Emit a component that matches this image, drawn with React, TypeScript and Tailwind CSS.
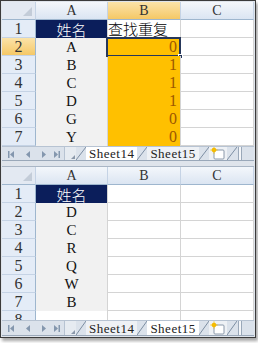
import React from "react";

const serif = "[font-family:'Liberation_Serif','DejaVu_Serif',serif]";
const cjk = "[font-family:'Noto_Sans_CJK_SC','Noto_Sans',sans-serif]";

function Slant({ h = 15 }: { h?: number }) {
  return (
    <svg width="10" height={h} viewBox={`0 0 10 ${h}`} className="shrink-0">
      <line x1="0" y1={h} x2="10" y2="0" stroke="#7d8ea3" strokeWidth="1" />
    </svg>
  );
}

function NavIcons() {
  return (
    <svg width="62" height="15" viewBox="0 0 62 15" className="shrink-0">
      <g fill="#8497ae">
        <rect x="6" y="4" width="1.5" height="7" />
        <polygon points="12,4 12,11 8,7.5" />
        <polygon points="28,4 28,11 24,7.5" />
        <polygon points="40,4 40,11 44,7.5" />
        <polygon points="52,4 52,11 56,7.5" />
        <rect x="56.5" y="4" width="1.5" height="7" />
      </g>
    </svg>
  );
}

function InsertIcon() {
  return (
    <svg width="18" height="15" viewBox="0 0 18 15" className="shrink-0">
      <rect x="5" y="4" width="10" height="9" fill="#ffffff" stroke="#8a98aa" strokeWidth="1" rx="1" />
      <circle cx="5" cy="4" r="2.3" fill="#f5b400" />
      <g stroke="#f5c400" strokeWidth="0.8">
        <line x1="5" y1="0.3" x2="5" y2="7.7" />
        <line x1="1.3" y1="4" x2="8.7" y2="4" />
      </g>
    </svg>
  );
}

function TabBar({ active, h }: { active: 0 | 1; h: number }) {
  const tabCls = (i: number) =>
    `flex items-center h-full px-[3px] text-[13px] leading-none tracking-[0.5px] text-[#222] ${serif} ${
      active === i ? "bg-white" : "bg-[#eef1f5]"
    }`;
  return (
    <div
      className="flex items-stretch bg-[#dbe2eb] border-t border-[#b7c3d2] border-b border-b-[#9aa8b9] overflow-hidden"
      style={{ height: h }}
    >
      <NavIcons />
      <div className="w-[12px] shrink-0 relative border-l border-[#b7c3d2] bg-[#e6ebf1]">
        <div className="absolute right-[1px] bottom-[1px] w-0 h-0 border-l-[4px] border-l-transparent border-b-[4px] border-b-[#8a98aa]" />
      </div>
      <Slant h={h - 2} />
      <div className={tabCls(0)}>Sheet14</div>
      <Slant h={h - 2} />
      <div className={tabCls(1)}>Sheet15</div>
      <Slant h={h - 2} />
      <div className="flex items-center bg-[#eef1f5]">
        <InsertIcon />
      </div>
      <Slant h={h - 2} />
      <div className="w-[4px] shrink-0 ml-[1px] border-x border-[#9aa8b9] bg-[#f4f6f9]" />
      <div className="flex-1" />
    </div>
  );
}

const cols = "grid grid-cols-[34px_72px_73px_73px]";

function HeaderRow({ selB }: { selB?: boolean }) {
  const base = `h-[18px] flex items-center justify-center text-[14px] leading-none text-[#333] ${serif} border-r border-[#c5d3e5] border-b border-b-[#9eb6ce]`;
  const norm = "bg-gradient-to-b from-[#f4f7fb] to-[#dbe5f2]";
  const sel = "bg-gradient-to-b from-[#fbe3a8] to-[#f5c865]";
  return (
    <div className={cols}>
      <div className={`${base} bg-[#e3e9f2] relative`}>
        <div className="absolute right-[3px] bottom-[3px] w-0 h-0 border-l-[9px] border-l-transparent border-b-[9px] border-b-[#c3ccd8]" />
      </div>
      <div className={`${base} ${norm}`}>A</div>
      <div className={`${base} ${selB ? sel : norm}`}>B</div>
      <div className={`${base} ${norm}`}>C</div>
    </div>
  );
}

type Cell = { text?: string; kind: "name" | "white" | "gray" | "gold" | "title" };

function Row({
  n,
  a,
  b,
  selNum,
  h = 18,
  selected,
}: {
  n: number;
  a: Cell;
  b: Cell;
  selNum?: boolean;
  h?: number;
  selected?: boolean;
}) {
  const numCls = `flex items-center justify-center text-[16px] leading-none text-[#333] ${serif} border-r border-[#9eb6ce] border-b border-b-[#c5d3e5] ${
    selNum ? "bg-gradient-to-b from-[#fbe3a8] to-[#f5c865]" : "bg-[#e4ecf7]"
  }`;
  const cellCls = (c: Cell, align: string) => {
    if (c.kind === "name")
      return `flex items-center justify-center bg-[#0b1e5b] text-white text-[15px] leading-none font-light ${cjk} border-r border-[#d4d4d4]`;
    if (c.kind === "title")
      return `flex items-center justify-start bg-white text-black text-[15px] leading-none font-light ${cjk} border-r border-b border-[#d4d4d4] whitespace-nowrap`;
    if (c.kind === "gray")
      return `flex items-center justify-center bg-[#f1f1f1] text-[#111] text-[15px] leading-none ${serif} border-r border-[#d4d4d4]`;
    if (c.kind === "gold")
      return `flex items-center ${align} pr-[3px] bg-[#ffc000] text-[#9c5700] text-[16px] leading-none ${serif} border-r border-[#d4d4d4]`;
    return `bg-white border-r border-b border-[#d4d4d4]`;
  };
  return (
    <div className={cols} style={{ height: h }}>
      <div className={numCls}>{n}</div>
      <div className={cellCls(a, "justify-center")}>{a.text}</div>
      <div className={`${cellCls(b, "justify-end")} relative`}>
        {b.text}
        {selected && (
          <div className="absolute left-[-2px] top-[-1px] right-[-1px] bottom-[-1px] border-2 border-[#26375a]">
            <div className="absolute right-[-4px] bottom-[-4px] w-[5px] h-[5px] bg-[#26375a] border border-white" />
          </div>
        )}
      </div>
      <div className="bg-white border-r border-b border-[#d4d4d4]" />
    </div>
  );
}

export default function App() {
  const top = ["A", "B", "C", "D", "G", "Y"];
  const vals = ["0", "1", "1", "1", "0", "0"];
  const bot = ["D", "C", "R", "Q", "W", "B"];
  return (
    <div className="w-[258px] h-[343px] bg-white relative overflow-hidden">
      <div className="w-[256px] h-[338px] border border-[#3b3b3b] bg-[#dfe4eb] p-[1px] flex flex-col shadow-[2px_3px_3px_rgba(0,0,0,0.35)]">
        <div className="flex flex-col">
          <HeaderRow selB />
          <Row n={1} a={{ text: "姓名", kind: "name" }} b={{ text: "查找重复", kind: "title" }} />
          {top.map((t, i) => (
            <Row
              key={i}
              n={i + 2}
              selNum={i === 0}
              selected={i === 0}
              a={{ text: t, kind: "gray" }}
              b={{ text: vals[i], kind: "gold" }}
            />
          ))}
          <TabBar active={0} h={15} />
        </div>
        <div className="h-[6px] bg-[#dfe4eb] border-b border-[#aab6c5]" />
        <div className="flex flex-col">
          <HeaderRow />
          <Row n={1} a={{ text: "姓名", kind: "name" }} b={{ kind: "white" }} />
          {bot.map((t, i) => (
            <Row key={i} n={i + 2} a={{ text: t, kind: "gray" }} b={{ kind: "white" }} />
          ))}
          <div className="overflow-hidden h-[9px]">
            <Row n={8} a={{ kind: "white" }} b={{ kind: "white" }} />
          </div>
          <TabBar active={1} h={16} />
        </div>
      </div>
    </div>
  );
}
